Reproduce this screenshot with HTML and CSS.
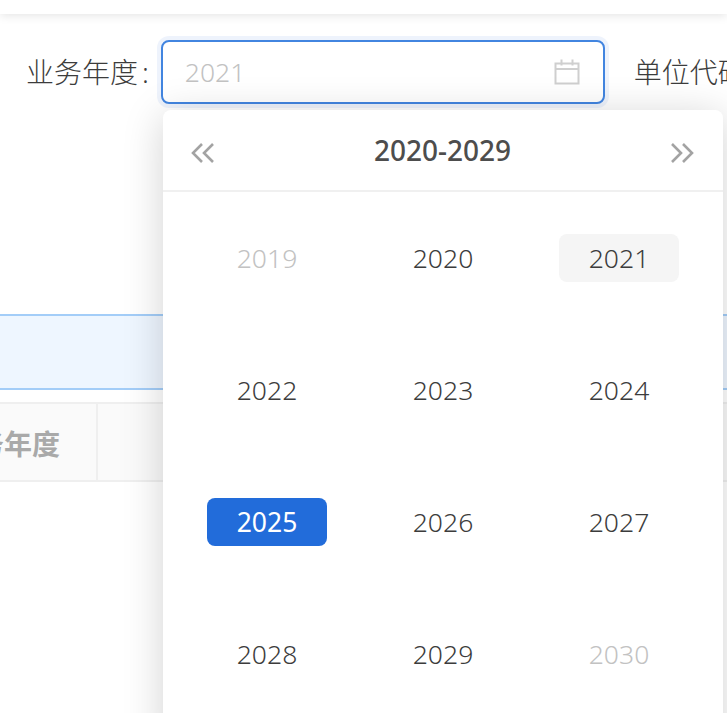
FILE: index.html
```html
<!DOCTYPE html>
<html>
<head>
    <title>业务年度</title>
    <link rel="stylesheet" href="styles.css">
</head>
<body>
    <div class="page">
        <div class="top-bar"></div>
        <form class="search-row">
            <label class="field-label">业务年度<span class="colon">:</span></label>
            <div class="date-input">
                <span class="placeholder">2021</span>
                <svg class="cal-icon" width="28" height="28" viewBox="0 0 28 28">
                    <path d="M2.5 5.5h23v20h-23zM2.5 11h23M8.500 1.500v6M19.500 1.500v6" fill="none" stroke="#cfcfcf" stroke-width="2"/>
                </svg>
            </div>
            <label class="field-label next-label">单位代码</label>
        </form>
        <div class="alert-band"></div>
        <div class="table-head">
            <div class="th th-year"><span>业务年度</span></div>
            <div class="th th-rest"></div>
        </div>

        <div class="picker">
            <div class="picker-head">
                <svg class="arrow" width="26" height="22" viewBox="0 0 26 22">
                    <path d="M12 2l-9 9 9 9M23 2l-9 9 9 9" fill="none" stroke="#a3a3a3" stroke-width="2.600"/>
                </svg>
                <span class="picker-title">2020-2029</span>
                <svg class="arrow" width="26" height="22" viewBox="0 0 26 22">
                    <path d="M3 2l9 9-9 9M14 2l9 9-9 9" fill="none" stroke="#a3a3a3" stroke-width="2.600"/>
                </svg>
            </div>
            <div class="picker-body">
                <div class="cell muted"><span>2019</span></div>
                <div class="cell"><span>2020</span></div>
                <div class="cell current"><span>2021</span></div>
                <div class="cell"><span>2022</span></div>
                <div class="cell"><span>2023</span></div>
                <div class="cell"><span>2024</span></div>
                <div class="cell selected"><span>2025</span></div>
                <div class="cell"><span>2026</span></div>
                <div class="cell"><span>2027</span></div>
                <div class="cell"><span>2028</span></div>
                <div class="cell"><span>2029</span></div>
                <div class="cell muted"><span>2030</span></div>
            </div>
        </div>
    </div>
</body>
</html>
```

FILE: styles.css
```css
html, body {
    margin: 0;
    height: 100%;
    overflow: hidden;
    background-color: #fff;
}
body {
    font-family: "Noto Sans", "Noto Sans CJK SC", sans-serif;
    font-weight: 300;
    color: #3c3c3c;
}
.page {
    position: relative;
    width: 727px;
    height: 713px;
    overflow: hidden;
}
.top-bar {
    height: 14px;
    background-color: #fff;
    box-shadow: 0 2px 10px rgba(0, 0, 0, 0.10);
}
.search-row {
    display: flex;
    align-items: center;
    height: 62px;
    margin-top: 27px;
    padding-left: 26px;
    white-space: nowrap;
}
.field-label {
    font-size: 28px;
    line-height: 62px;
}
.colon {
    margin-left: 4px;
}
.date-input {
    box-sizing: border-box;
    display: flex;
    align-items: center;
    justify-content: space-between;
    flex: none;
    width: 444px;
    height: 64px;
    margin-left: 12px;
    padding: 0 22px 0 22px;
    border: 2px solid #4285e0;
    border-radius: 8px;
    box-shadow: 0 0 0 4px rgba(34, 108, 218, 0.08);
    background-color: #fff;
}
.placeholder {
    font-size: 26.5px;
    color: #c2c2c2;
}
.next-label {
    margin-left: 29px;
}
.alert-band {
    height: 72px;
    margin-top: 211px;
    border-top: 2px solid #a3cdf8;
    border-bottom: 2px solid #a3cdf8;
    background-color: #eef6ff;
}
.table-head {
    display: flex;
    height: 76px;
    margin-top: 12px;
    border-top: 2px solid #efefef;
    border-bottom: 2px solid #efefef;
    background-color: #fafafa;
}
.th {
    box-sizing: border-box;
    line-height: 80px;
    font-size: 28px;
    font-weight: 700;
    color: #a9a9a9;
    white-space: nowrap;
}
.th-year {
    display: flex;
    justify-content: flex-end;
    flex: none;
    width: 98px;
    padding-right: 36px;
    border-right: 2px solid #efefef;
    overflow: hidden;
}
.th-year span {
    flex: none;
}
.th-rest {
    flex: 1;
}
.picker {
    position: absolute;
    left: 163px;
    top: 110px;
    width: 560px;
    height: 640px;
    border-radius: 8px;
    background-color: #fff;
    box-shadow: 0 6px 40px rgba(0, 0, 0, 0.18);
}
.picker-head {
    box-sizing: border-box;
    display: flex;
    align-items: center;
    justify-content: space-between;
    height: 82px;
    padding: 6px 28px 0 27px;
    border-bottom: 2px solid #f0f0f0;
}
.picker-title {
    font-size: 28px;
    font-weight: 500;
    margin-top: -6px;
    color: #4d4d4d;
}
.arrow {
    flex: none;
}
.picker-body {
    display: grid;
    grid-template-columns: repeat(3, 176px);
    grid-auto-rows: 132px;
    padding: 0 16px;
}
.cell {
    display: flex;
    align-items: center;
    justify-content: center;
    font-size: 26.5px;
}
.cell span {
    display: block;
    width: 120px;
    height: 48px;
    line-height: 48px;
    text-align: center;
    border-radius: 8px;
}
.muted {
    color: #c2c2c2;
}
.current span {
    background-color: #f5f5f5;
}
.selected span {
    background-color: #226cda;
    color: #fff;
    font-weight: 400;
}
```
